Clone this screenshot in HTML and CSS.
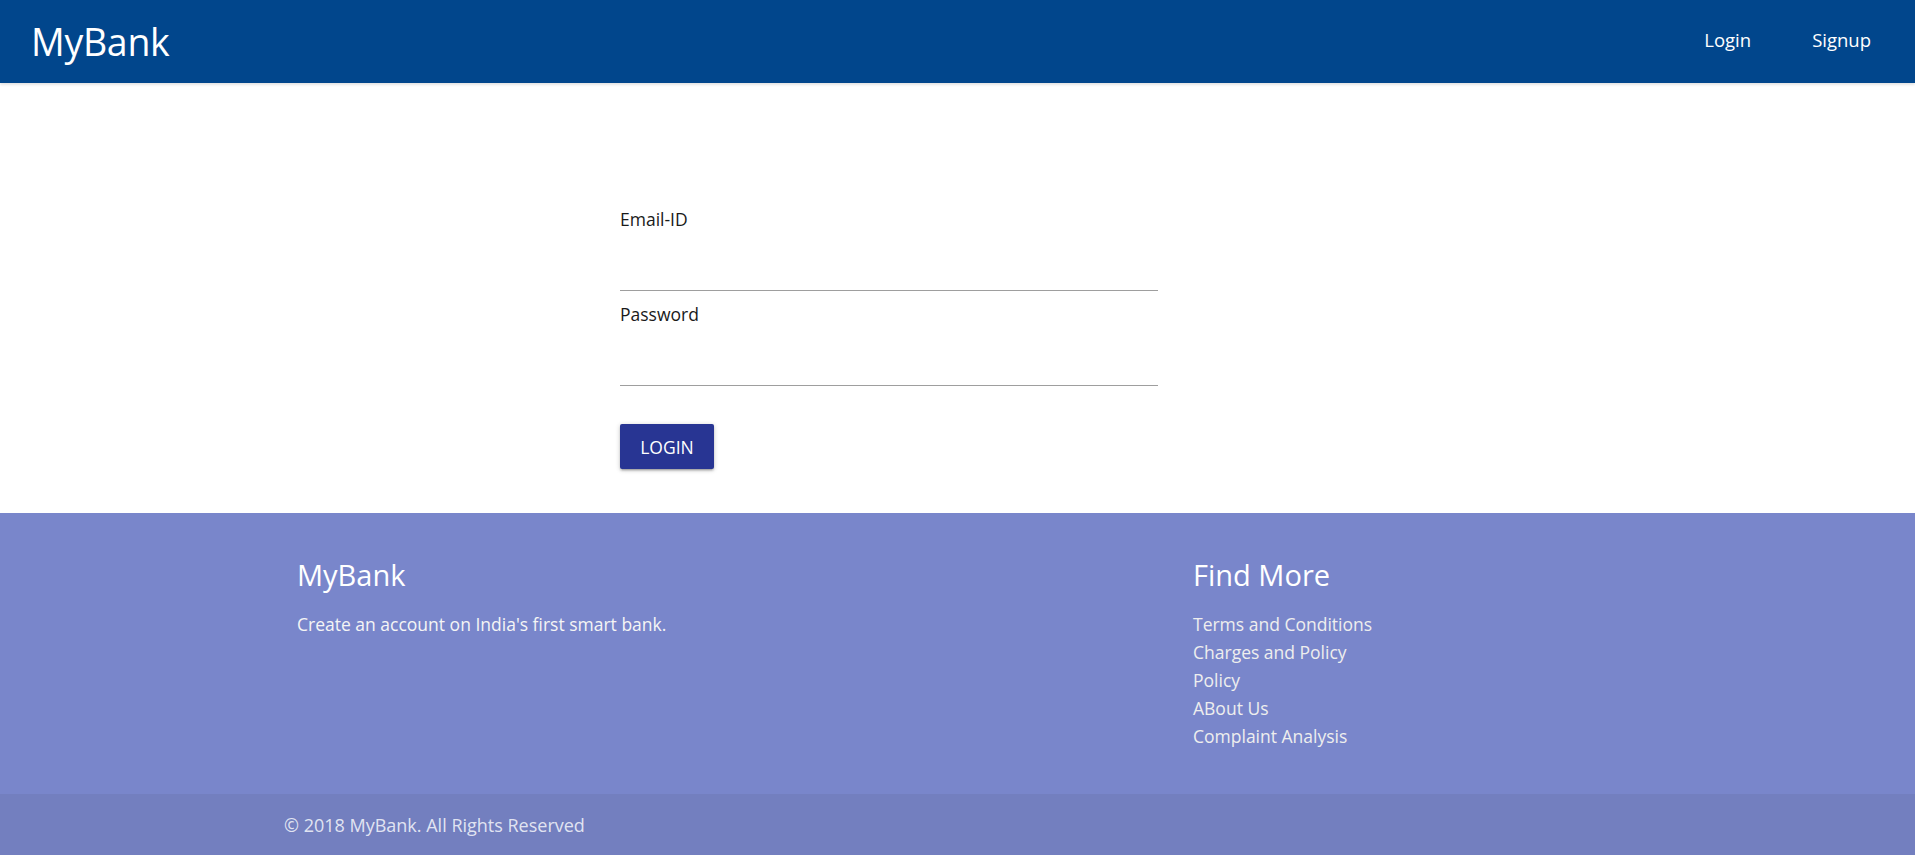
FILE: index.html
```html
<!DOCTYPE html>
<html lang="en">
<head>
<meta charset="utf-8">
<title>MyBank</title>
<link rel="stylesheet" href="styles.css">
</head>
<body>
<nav class="navbar">
  <a class="brand" href="#">MyBank</a>
  <ul class="nav-links">
    <li><a href="#">Login</a></li>
    <li><a href="#">Signup</a></li>
  </ul>
</nav>
<main class="main">
  <form class="login-form">
    <div class="field">
      <label class="field-label" for="email">Email-ID</label>
      <input class="field-input" id="email" type="email">
    </div>
    <div class="field">
      <label class="field-label" for="password">Password</label>
      <input class="field-input" id="password" type="password">
    </div>
    <button class="btn" type="button">LOGIN</button>
  </form>
</main>
<footer class="footer">
  <div class="footer-inner">
    <div class="footer-col">
      <h5 class="footer-title">MyBank</h5>
      <p class="footer-text">Create an account on India's first smart bank.</p>
    </div>
    <div class="footer-col">
      <h5 class="footer-title">Find More</h5>
      <ul class="footer-links">
        <li><a href="#">Terms and Conditions</a></li>
        <li><a href="#">Charges and Policy</a></li>
        <li><a href="#">Policy</a></li>
        <li><a href="#">ABout Us</a></li>
        <li><a href="#">Complaint Analysis</a></li>
      </ul>
    </div>
  </div>
  <div class="footer-copyright">
    <span>© 2018 MyBank. All Rights Reserved</span>
  </div>
</footer>
</body>
</html>
```
FILE: styles.css
```css
* { box-sizing: border-box; }
html, body { margin: 0; padding: 0; }
body {
  font-family: "Open Sans", "Noto Sans", "Liberation Sans", sans-serif;
  background: #fff;
  color: #222;
}
a { text-decoration: none; }

.navbar {
  height: 83px;
  background: #01468c;
  display: flex;
  align-items: center;
  justify-content: space-between;
  padding: 0 30px 0 31px;
  box-shadow: 0 2px 2px 0 rgba(0,0,0,.06), 0 1px 4px 0 rgba(0,0,0,.08);
  position: relative;
  z-index: 1;
}
.brand {
  color: #fff;
  font-size: 37.5px;
  line-height: 83px;
  letter-spacing: -0.3px;
}
.nav-links {
  list-style: none;
  margin: 0;
  padding: 0;
  display: flex;
}
.nav-links a {
  display: block;
  color: #fff;
  font-size: 18.5px;
  line-height: 80px;
  padding: 0 14px 3px 15px;
  margin-left: 32px;
}

.main {
  height: 430px;
  padding: 124px 0 0 620px;
}
.login-form { width: 538px; }
.field { margin-bottom: 11px; }
.field-label {
  display: block;
  font-size: 17.5px;
  line-height: 24px;
  color: #1a1a1a;
}
.field-input {
  display: block;
  width: 100%;
  height: 60px;
  border: none;
  border-bottom: 1px solid #9e9e9e;
  outline: none;
  background: transparent;
  font: inherit;
}
.btn {
  margin-top: 27px;
  width: 94px;
  height: 45px;
  border: none;
  border-radius: 2px;
  background: #283593;
  color: #fff;
  font-family: inherit;
  font-size: 17.5px;
  padding: 0;
  box-shadow: 0 2px 2px 0 rgba(0,0,0,.14), 0 3px 1px -2px rgba(0,0,0,.12), 0 1px 5px 0 rgba(0,0,0,.2);
}

.footer { background: #7986cb; }
.footer-inner {
  display: grid;
  grid-template-columns: 896px 1fr;
  padding: 42px 0 44px 297px;
}
.footer-title {
  margin: 0 0 17px;
  font-size: 29px;
  line-height: 40px;
  font-weight: 400;
  color: #fff;
}
.footer-text {
  margin: 0;
  font-size: 17.5px;
  line-height: 24px;
  color: #f5f5f5;
}
.footer-links {
  list-style: none;
  margin: -2px 0 0;
  padding: 0;
}
.footer-links a {
  display: block;
  font-size: 17.5px;
  line-height: 28px;
  color: #eeeeee;
}
.footer-copyright {
  height: 61px;
  display: flex;
  align-items: center;
  padding-left: 284px;
  background: rgba(51,51,51,0.08);
  color: rgba(255,255,255,0.8);
  font-size: 18px;
}
```
